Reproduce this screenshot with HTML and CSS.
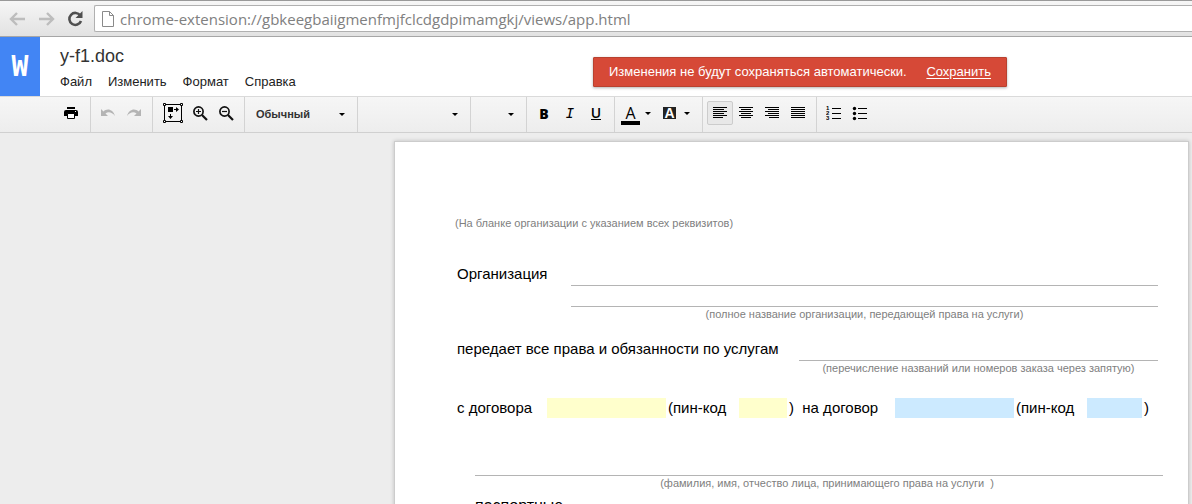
FILE: index.html
```html
<!DOCTYPE html>
<html lang="ru">
<head>
    <meta charset="UTF-8">
    <meta name="viewport" content="width=device-width, initial-scale=1.0">
    <title>y-f1.doc</title>
    <link rel="stylesheet" href="styles.css">
</head>
<body>
    <div class="browser-bar">
        <button class="nav-button" type="button" aria-label="Назад" disabled>
            <svg width="17" height="14" viewBox="0 0 17 14"><path d="M16 7H2M8 1L2 7l6 6" fill="none" stroke="#bdbdbd" stroke-width="2.4"/></svg>
        </button>
        <button class="nav-button" type="button" aria-label="Вперёд" disabled>
            <svg width="17" height="14" viewBox="0 0 17 14"><path d="M1 7h14M9 1l6 6-6 6" fill="none" stroke="#bdbdbd" stroke-width="2.4"/></svg>
        </button>
        <button class="nav-button" type="button" aria-label="Обновить">
            <svg width="17" height="16" viewBox="0 0 17 16"><path d="M13.3 4.5A6 6 0 1 0 14 10" fill="none" stroke="#505050" stroke-width="2.6"/><path d="M15.5 0v7H8.5z" fill="#505050"/></svg>
        </button>
        <div class="address">
            <svg width="12" height="16" viewBox="0 0 12 16"><path d="M.5.5h7l4 4v11H.5zM7.5.5v4h4" fill="#fff" stroke="#8a8a8a"/></svg>
            <input class="address-input" type="text" aria-label="Адрес" value="chrome-extension://gbkeegbaiigmenfmjfclcdgdpimamgkj/views/app.html">
        </div>
    </div>

    <header class="header">
        <div class="logo">W</div>
        <div class="title-block">
            <h1 class="doc-title">y-f1.doc</h1>
            <nav class="menu">
                <button type="button">Файл</button>
                <button type="button">Изменить</button>
                <button type="button">Формат</button>
                <button type="button">Справка</button>
            </nav>
        </div>
        <div class="notice" role="alert">
            <span>Изменения не будут сохраняться автоматически.</span>
            <a href="#save">Сохранить</a>
        </div>
    </header>

    <div class="toolbar" role="toolbar">
        <div class="group group-first">
            <button class="tool" type="button" aria-label="Печать">
                <svg width="14" height="12" viewBox="0 0 14 12"><path d="M3 0h8v2H3zM2 3h10a2 2 0 0 1 2 2v4h-3V7H3v2H0V5a2 2 0 0 1 2-2z"/><path d="M3.5 6.5h7v5h-7z" fill="#fff" stroke="#000"/><path d="M11 4h1v1h-1z" fill="#fff"/></svg>
            </button>
        </div>
        <div class="group">
            <button class="tool" type="button" aria-label="Отменить">
                <svg width="16" height="10" viewBox="0 0 16 10"><path d="M1 1v7h7L5.5 5.5C8 3.5 12 4 15 8 13 1 7 0 3.5 3.5z" fill="#b4b4b4"/></svg>
            </button>
            <button class="tool" type="button" aria-label="Повторить">
                <svg width="16" height="10" viewBox="0 0 16 10"><path d="M15 1v7H8l2.5-2.5C8 3.5 4 4 1 8 3 1 9 0 12.5 3.5z" fill="#b4b4b4"/></svg>
            </button>
        </div>
        <div class="group">
            <button class="tool tool-wide" type="button" aria-label="По размеру окна">
                <svg width="20" height="20" viewBox="0 0 20 20"><path d="M1.5 1.5h17v17h-17z" fill="none" stroke="#000"/><g fill="#fff" stroke="#000"><path d="M.5.5h2v2h-2zM17.5.5h2v2h-2zM.5 17.5h2v2h-2zM17.5 17.5h2v2h-2z"/></g><path d="M5 4h5v5H5zM11 6h2V4l3 2.5L13 9V7h-2zM7 11h1v2h2l-2.5 3L5 13h2z"/></svg>
            </button>
            <button class="tool" type="button" aria-label="Увеличить">
                <svg width="15" height="15" viewBox="0 0 15 15"><g fill="none" stroke="#111"><circle cx="5.5" cy="5.5" r="4.6" stroke-width="1.7"/><path d="M9 9l5 5" stroke-width="2.2"/><path d="M5.5 3v5M3 5.5h5" stroke-width="1.2"/></g></svg>
            </button>
            <button class="tool" type="button" aria-label="Уменьшить">
                <svg width="15" height="15" viewBox="0 0 15 15"><g fill="none" stroke="#111"><circle cx="5.5" cy="5.5" r="4.6" stroke-width="1.7"/><path d="M9 9l5 5" stroke-width="2.2"/><path d="M3 5.5h5" stroke-width="1.2"/></g></svg>
            </button>
        </div>
        <div class="drop drop-style">
            <select aria-label="Стиль"><option>Обычный</option></select>
            <i class="arrow"></i>
        </div>
        <div class="drop drop-font">
            <select aria-label="Шрифт"><option></option></select>
            <i class="arrow"></i>
        </div>
        <div class="drop drop-size">
            <select aria-label="Размер шрифта"><option></option></select>
            <i class="arrow"></i>
        </div>
        <div class="group">
            <button class="tool letter bold" type="button" aria-label="Полужирный">B</button>
            <button class="tool letter italic" type="button" aria-label="Курсив">I</button>
            <button class="tool letter" type="button" aria-label="Подчёркнутый"><span class="underlined">U</span></button>
        </div>
        <div class="group">
            <button class="tool tool-color" type="button" aria-label="Цвет текста">
                <span class="text-color">A</span>
                <i class="arrow"></i>
            </button>
            <button class="tool tool-color" type="button" aria-label="Цвет фона">
                <span class="back-color">A</span>
                <i class="arrow"></i>
            </button>
        </div>
        <div class="group">
            <button class="tool pressed" type="button" aria-label="По левому краю" aria-pressed="true">
                <svg width="14" height="12" viewBox="0 0 14 12"><path d="M0 .5h14M0 2.5h11M0 4.5h14M0 6.5h11M0 8.5h14M0 10.5h10" stroke="#000"/></svg>
            </button>
            <button class="tool" type="button" aria-label="По центру">
                <svg width="14" height="12" viewBox="0 0 14 12"><path d="M0 .5h14M2 2.5h10M0 4.5h14M2 6.5h10M0 8.5h14M2 10.5h10" stroke="#000"/></svg>
            </button>
            <button class="tool" type="button" aria-label="По правому краю">
                <svg width="14" height="12" viewBox="0 0 14 12"><path d="M0 .5h14M3 2.5h11M0 4.5h14M3 6.5h11M0 8.5h14M4 10.5h10" stroke="#000"/></svg>
            </button>
            <button class="tool" type="button" aria-label="По ширине">
                <svg width="14" height="12" viewBox="0 0 14 12"><path d="M0 .5h14M0 2.5h14M0 4.5h14M0 6.5h14M0 8.5h14M0 10.5h14" stroke="#000"/></svg>
            </button>
        </div>
        <div class="group group-last">
            <button class="tool" type="button" aria-label="Нумерованный список">
                <svg width="16" height="16" viewBox="0 0 16 16"><path d="M6 3.5h9M6 8.5h9M6 13.5h9" stroke="#000"/><g class="list-digits"><text x="0" y="5">1</text><text x="0" y="10">2</text><text x="0" y="15">3</text></g></svg>
            </button>
            <button class="tool" type="button" aria-label="Маркированный список">
                <svg width="16" height="16" viewBox="0 0 16 16"><path d="M6 3.5h9M6 8.5h9M6 13.5h9" stroke="#000"/><circle cx="2.5" cy="3.5" r="1.7"/><circle cx="2.5" cy="8.5" r="1.7"/><circle cx="2.5" cy="13.5" r="1.7"/></svg>
            </button>
        </div>
    </div>

    <main class="workspace">
        <div class="page">
            <p class="hint">(На бланке организации с указанием всех реквизитов)</p>

            <div class="row row-org">
                <label for="org">Организация</label>
                <div class="lines">
                    <input class="line" type="text" id="org">
                    <input class="line" type="text" aria-label="Организация, продолжение">
                    <p class="hint">(полное название организации, передающей права на услуги)</p>
                </div>
            </div>

            <div class="row row-services">
                <label for="services">передает все права и обязанности по услугам</label>
                <div class="lines">
                    <input class="line" type="text" id="services">
                    <p class="hint">(перечисление названий или номеров заказа через запятую)</p>
                </div>
            </div>

            <div class="contracts">
                <label for="from">с договора</label>
                <input class="fill from" type="text" id="from">
                <label for="fromPin">(пин-код</label>
                <input class="fill from" type="text" id="fromPin">
                <label for="to">)&nbsp; на договор</label>
                <input class="fill to" type="text" id="to">
                <label for="toPin">(пин-код</label>
                <input class="fill to" type="text" id="toPin">
                <span>)</span>
            </div>

            <div class="person">
                <input class="line" type="text" aria-label="Фамилия, имя, отчество">
                <p class="hint">(фамилия, имя, отчество лица, принимающего права на услуги &nbsp;)</p>
                <p class="passport">паспортные</p>
            </div>
        </div>
    </main>
</body>
</html>
```

FILE: styles.css
```css
* {
    box-sizing: border-box;
}
body {
    font-family: "Liberation Sans", Arial, sans-serif;
    display: flex;
    flex-direction: column;
    height: 100vh;
    margin: 0;
    overflow: hidden;
    background-color: #ededed;
    color: #000;
}
button, input, select {
    font-family: inherit;
    margin: 0;
    padding: 0;
    border: none;
    border-radius: 0;
    background: none;
    color: inherit;
}
h1, p {
    margin: 0;
}
svg {
    display: block;
}

/* browser bar */
.browser-bar {
    display: flex;
    align-items: center;
    flex: none;
    height: 37px;
    padding-left: 3px;
    border-top: 1px solid #999;
    border-bottom: 1px solid #a6a6a6;
    background: linear-gradient(#f6f6f6, #e2e2e2);
}
.nav-button {
    display: flex;
    justify-content: center;
    width: 29px;
}
.address {
    display: flex;
    align-items: center;
    flex: 1;
    gap: 6px;
    height: 27px;
    margin-left: 4px;
    padding-left: 7px;
    border: 1px solid #b0b0b0;
    border-right: none;
    border-radius: 2px 0 0 2px;
    background-color: #fff;
}
.address-input {
    flex: 1;
    font-family: "Open Sans", "Noto Sans", sans-serif;
    font-size: 15px;
    color: #808080;
}

/* header */
.header {
    display: flex;
    flex: none;
    height: 59px;
    background-color: #fff;
}
.logo {
    display: flex;
    justify-content: center;
    align-items: center;
    width: 40px;
    background-color: #4285f4;
    color: #fff;
    font-family: "DejaVu Sans Mono", monospace;
    font-size: 28px;
    font-weight: bold;
}
.title-block {
    padding: 8px 0 0 20px;
}
.doc-title {
    font-size: 18px;
    font-weight: normal;
    line-height: 22px;
    color: #333;
}
.menu {
    display: flex;
    gap: 16px;
    padding-top: 7px;
}
.menu button {
    font-size: 13px;
    line-height: 16px;
    color: #222;
}
.notice {
    display: flex;
    justify-content: space-between;
    align-items: center;
    gap: 15px;
    min-width: 414px;
    height: 30px;
    margin: 20px 185px 0 auto;
    padding: 0 15px;
    border: 1px solid #b8412f;
    border-radius: 1px;
    background-color: #d64937;
    box-shadow: 0 1px 3px rgba(0, 0, 0, 0.3);
    color: #fff;
    font-size: 13px;
    line-height: 16px;
    white-space: nowrap;
}
.notice a {
    color: #fff;
    text-underline-offset: 2px;
}

/* toolbar */
.toolbar {
    display: flex;
    flex: none;
    height: 37px;
    border-top: 1px solid #dadada;
    border-bottom: 1px solid #d0d0d0;
    background: linear-gradient(#f6f6f6, #ededed);
}
.group, .drop {
    display: flex;
    align-items: center;
    border-right: 1px solid #d3d3d3;
}
.group {
    padding: 0 5px 3px 4px;
}
.group-first {
    padding-left: 58px;
    padding-right: 6px;
}
.group-last {
    border-right: none;
}
.tool {
    display: flex;
    justify-content: center;
    align-items: center;
    width: 26px;
    height: 24px;
}
.tool-wide {
    width: 30px;
    padding-left: 2px;
}
.tool-color {
    justify-content: flex-start;
    width: 39px;
    gap: 5px;
    padding-left: 2px;
}
.pressed {
    border: 1px solid #ccc;
    border-radius: 2px;
    background-color: #e8e8e8;
}
.letter {
    font-family: "Open Sans", sans-serif;
    font-size: 14px;
    font-weight: 600;
}
.bold {
    font-weight: 800;
}
.italic {
    font-family: "DejaVu Sans Mono", monospace;
    font-style: italic;
    font-weight: normal;
}
.underlined {
    line-height: 12px;
    border-bottom: 1px solid #000;
}
.text-color {
    width: 19px;
    margin-top: 3px;
    border-bottom: 4px solid #000;
    font-family: "Open Sans", sans-serif;
    font-size: 16px;
    line-height: 16px;
}
.back-color {
    width: 13px;
    margin: 0 3px;
    background-color: #222;
    color: #fff;
    font-size: 14px;
    font-weight: bold;
    line-height: 12px;
}
.arrow {
    border: 3px solid transparent;
    border-top-color: #000;
    border-bottom: none;
}
.list-digits {
    font-size: 6px;
    font-weight: bold;
}
.drop {
    position: relative;
}
.drop select {
    width: 100%;
    height: 100%;
    padding: 0 24px 2px 11px;
    appearance: none;
    font-size: 11px;
    font-weight: bold;
    color: #333;
}
.drop .arrow {
    position: absolute;
    right: 12px;
    pointer-events: none;
}
.drop-style, .drop-font {
    width: 113px;
}
.drop-size {
    width: 56px;
}

/* document */
.workspace {
    flex: 1;
    min-height: 0;
    padding: 8px 3px 0;
    overflow: hidden;
}
.page {
    width: 795px;
    min-height: 1123px;
    margin-left: auto;
    padding: 74px 30px 0 60px;
    border: 1px solid #ccc;
    background-color: #fff;
    box-shadow: 0 0 4px rgba(0, 0, 0, 0.2);
    font-size: 15px;
    line-height: 18px;
}
.hint {
    font-size: 11px;
    line-height: 14px;
    color: #808080;
}
.row {
    display: grid;
    padding-left: 2px;
}
.row-org {
    grid-template-columns: 114px 1fr;
    padding-top: 35px;
}
.row-services {
    grid-template-columns: 342px 1fr;
    padding-top: 19px;
}
.line {
    display: block;
    width: 100%;
    height: 21px;
    border-bottom: 1px solid #b4b4b4;
}
.lines .hint, .person .hint {
    text-align: center;
}
.contracts {
    display: grid;
    grid-template-columns: 92px 119px 73px 48px 108px 119px 73px 55px auto;
    align-items: center;
    padding-top: 23px;
}
.contracts label, .contracts span {
    padding-left: 2px;
}
.fill {
    width: 100%;
    height: 20px;
}
.from {
    background-color: #ffffcc;
}
.to {
    background-color: #cceaff;
}
.person {
    margin-right: -5px;
    padding: 37px 0 0 20px;
}
.person .hint {
    padding-left: 16px;
}
.passport {
    padding-top: 7px;
    font-size: 16px;
}
```
